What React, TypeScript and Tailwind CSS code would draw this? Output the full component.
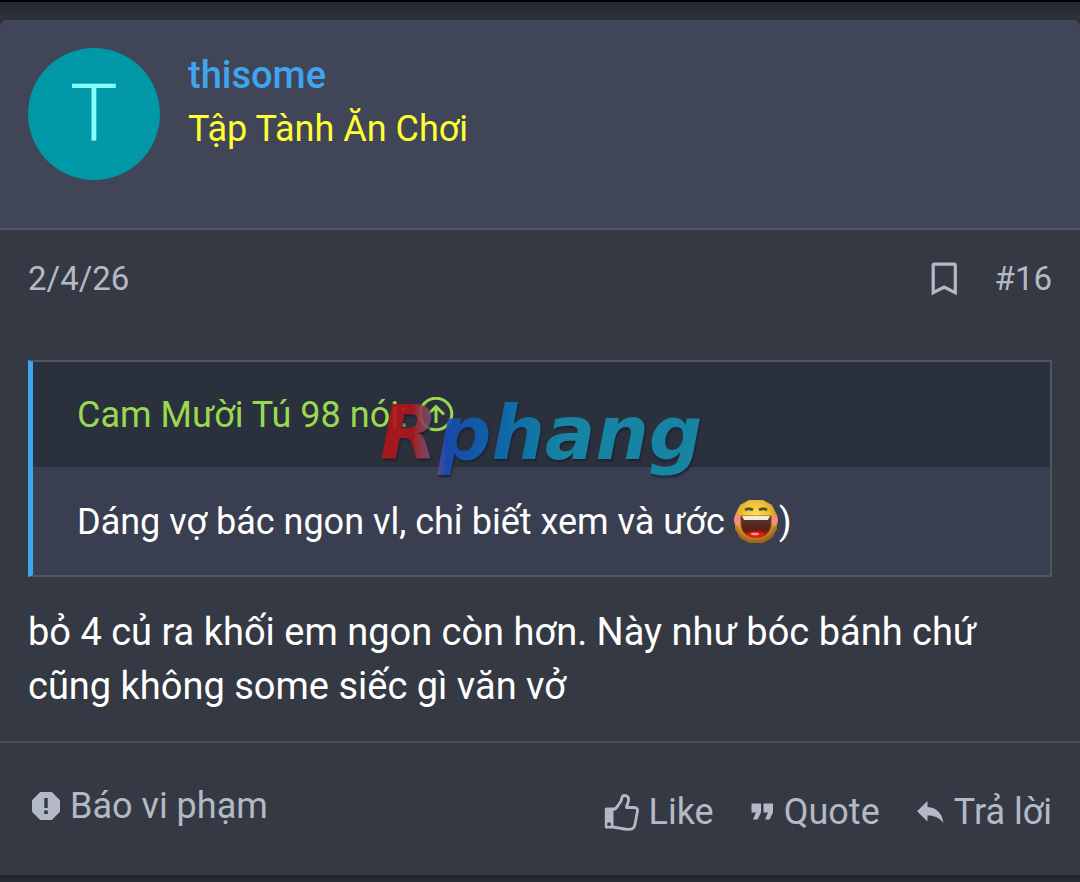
import React from "react";

const Bookmark = () => (
  <svg width="28" height="34" viewBox="0 0 28 34" fill="none" stroke="currentColor" strokeWidth="3.2" aria-hidden="true">
    <path d="M2.2 30.6V3.3Q2.2 2.2 3.3 2.2H23.2Q24.3 2.2 24.3 3.3V30.6L13.2 25Z" />
  </svg>
);

const ArrowUpCircle = () => (
  <svg width="36" height="36" viewBox="0 0 36 36" fill="none" stroke="currentColor" strokeWidth="3" aria-hidden="true">
    <circle cx="18" cy="17" r="15.8" />
    <path d="M18 26V10M10 17.5L18 9.5L26 17.5" />
  </svg>
);

const Alert = () => (
  <svg width="28" height="28" viewBox="0 0 28 28" fill="currentColor" aria-hidden="true">
    <path fillRule="evenodd" d="M8.2 0H19.8L28 8.2V19.8L19.8 28H8.2L0 19.8V8.2ZM12.3 6H15.7V16H12.3ZM12.2 18.5H15.8V22H12.2Z" />
  </svg>
);

const ThumbUp = () => (
  <svg width="36" height="38" viewBox="0 0 36 38" fill="none" stroke="currentColor" strokeWidth="2.8" strokeLinejoin="round" aria-hidden="true">
    <path fill="currentColor" stroke="none" fillRule="evenodd" d="M3.5 14.5H10.5V35.5H3.5Q1.8 35.5 1.8 34V16Q1.8 14.5 3.5 14.5ZM6 29.3A1.9 1.9 0 1 0 6 33.1A1.9 1.9 0 1 0 6 29.3Z" />
    <path d="M10 16.5C13 16 14 14.5 15 12.5C16.2 10.5 17.8 9 18.4 7C19 4.5 18.8 2.5 21.2 2.5C24.8 2.5 26.2 5 25.4 8C25 10.5 23.8 12 23.5 14.5H31.2C33.8 14.5 34.8 16 34.4 18L32 31.5C31.4 34.5 29.5 36.3 26.5 36.3C20 36.8 16 34.5 10 34" />
  </svg>
);

const QuoteMarks = () => (
  <svg width="24" height="18" viewBox="0 0 24 18" fill="currentColor" aria-hidden="true">
    <path d="M1.5 0.5H11V9.5L7.5 16.5H3L6 9.5H1.5ZM13.5 0.5H23V9.5L19.5 16.5H15L18 9.5H13.5Z" />
  </svg>
);

const Reply = () => (
  <svg width="28" height="24" viewBox="0 0 28 24" fill="currentColor" aria-hidden="true">
    <path d="M11.5 1V7C20.5 7.5 26 13 27.5 23C23 17.5 18.5 15.5 11.5 15.5V21.5L1 11.2Z" />
  </svg>
);

const LaughingFace = () => (
  <svg role="img" aria-label="cười" width="46" height="44" viewBox="0 0 46 44" className="shrink-0">
    <defs>
      <radialGradient id="skin" cx=".48" cy=".35" r=".62">
        <stop offset="0" stopColor="#ffe45c" />
        <stop offset=".65" stopColor="#e9b030" />
        <stop offset="1" stopColor="#9c641a" />
      </radialGradient>
      <linearGradient id="mouth" x1="0" y1="0" x2="0" y2="1">
        <stop offset="0" stopColor="#5a3a2c" />
        <stop offset=".6" stopColor="#542016" />
        <stop offset="1" stopColor="#c8120c" />
      </linearGradient>
    </defs>
    <path fill="url(#skin)" d="M16 0H30L39 5L44 15V29L39 38L30 43H16L7 38L2 29V15L7 5Z" />
    <ellipse cx="4.5" cy="20" rx="3.5" ry="6" fill="#f08f7c" />
    <ellipse cx="41.5" cy="20" rx="3.5" ry="6" fill="#f08f7c" />
    <path d="M12 10Q16 7.500 20 10M26 10Q30 7.500 34 10" fill="none" stroke="#4c5a20" strokeWidth="3" />
    <path d="M8 16H38V26Q36 37 23 37.500Q10 37 8 26Z" fill="url(#mouth)" stroke="#8a501c" strokeWidth="1" />
    <path d="M9 16H37L35 20H11Z" fill="#f7e9dc" />
    <ellipse cx="23" cy="34.500" rx="9" ry="3" fill="#e81812" />
    <ellipse cx="22" cy="34" rx="4" ry="1.300" fill="#ff9a86" />
  </svg>
);

export default function App() {
  return (
    <div className="bg-[#2b2e39] font-['Roboto',sans-serif] text-[#b4b9c6]">
      <div className="h-5 border-t-2 border-black bg-linear-to-b from-[#242730] to-[#30343e]" />
      <article className="rounded-t-md border-b border-[#20232c] bg-[#353943] shadow-[0_2px_6px_#1c1f27]">
        <header className="flex min-h-[210px] gap-7 rounded-t-md border-b-2 border-[#505968] bg-[#404557] px-7 pt-7">
          <a href="#profile" aria-label="Trang cá nhân" className="flex size-[132px] shrink-0 items-center justify-center rounded-full bg-[#0097a7] text-[80px] leading-none text-[#84ffff]">
            <span className="font-light">T</span>
          </a>
          <div>
            <h2 className="text-[38px] leading-[54px] font-medium text-[#3fa5ec]">
              <a href="#profile">thisome</a>
            </h2>
            <p className="text-[36px] leading-[54px] text-[#ffff33]">Tập Tành Ăn Chơi</p>
          </div>
        </header>

        <div className="flex items-center justify-between px-7 pt-6 text-[33px] leading-[50px]">
          <time dateTime="2026-04-02">2/4/26</time>
          <div className="flex items-center gap-9">
            <button type="button" aria-label="Đánh dấu"><Bookmark /></button>
            <a href="#post-16">#16</a>
          </div>
        </div>

        <div className="px-7 pt-14 pb-7 text-[38px] leading-[54px] text-white">
          <blockquote className="relative border-2 border-l-[5px] border-[#505661] border-l-[#3fa5ec] bg-[#393f50]">
            <a href="#quoted" className="flex h-[105px] items-center gap-2.5 bg-[#2b303d] px-11 text-[36px] text-[#98d94f]">
              <span>Cam Mười Tú 98 nói:</span>
              <ArrowUpCircle />
            </a>
            <p className="flex items-center px-11 pt-7 pb-[26px] text-[36px]">
              <span className="mr-2">Dáng vợ bác ngon vl, chỉ biết xem và ước</span>
              <LaughingFace />
              <span>)</span>
            </p>
            <div className="pointer-events-none absolute top-[23px] left-[347px] bg-linear-to-r from-[#b0151b] from-10% via-[#174bb5] via-20% to-[#148ead] to-55% bg-clip-text pr-2 font-['DejaVu_Sans',sans-serif] text-[75px] leading-[96px] font-bold text-transparent italic opacity-90 drop-shadow-[1px_2px_1px_#172033]">
              Rphang
            </div>
          </blockquote>
          <p className="pt-7">
            bỏ 4 củ ra khối em ngon còn hơn. Này như bóc bánh chứ cũng không some siếc gì văn vở
          </p>
        </div>

        <footer className="flex items-start justify-between border-t-2 border-[#4a4e58] px-7 pt-9 pb-9 text-[36px] leading-[54px]">
          <button type="button" className="flex items-center gap-2.5 pl-1"><Alert />Báo vi phạm</button>
          <div className="flex items-center gap-9 pt-1.5">
            <button type="button" className="flex items-center gap-2.5"><ThumbUp />Like</button>
            <button type="button" className="flex items-center gap-2.5"><QuoteMarks />Quote</button>
            <a href="#reply" className="flex items-center gap-2.5"><Reply />Trả lời</a>
          </div>
        </footer>
      </article>
      <div className="h-2" />
    </div>
  );
}
